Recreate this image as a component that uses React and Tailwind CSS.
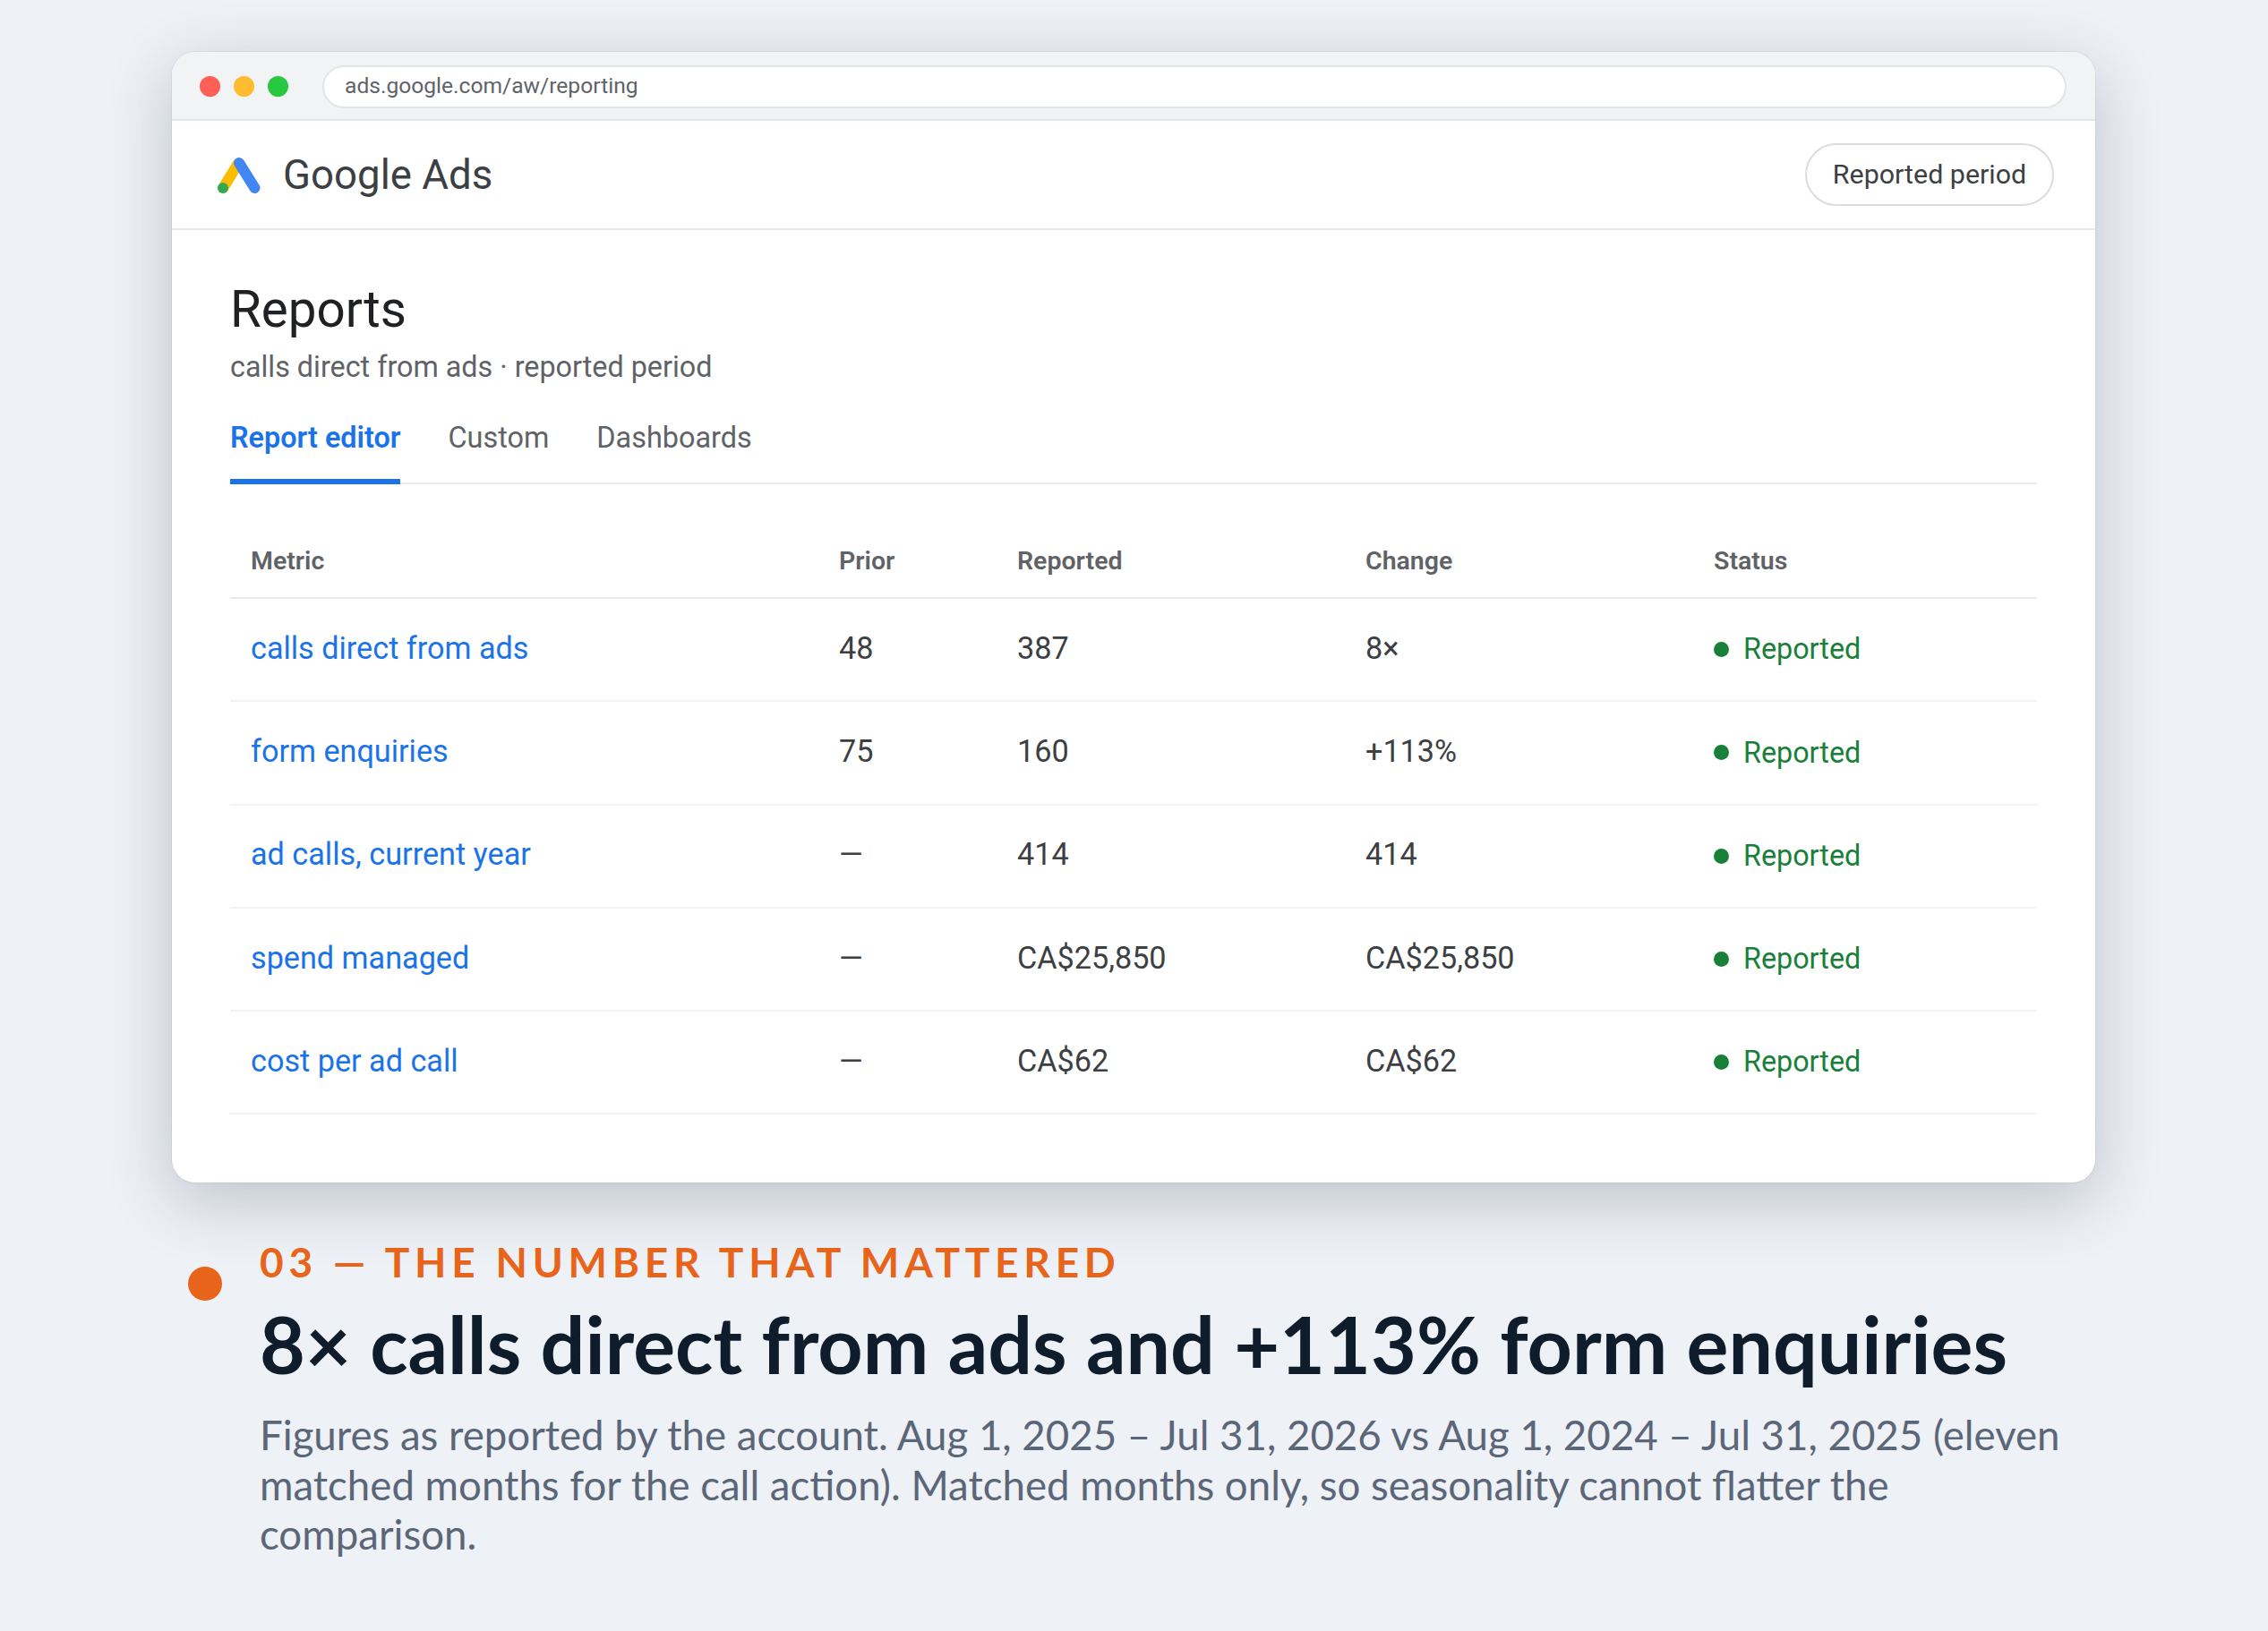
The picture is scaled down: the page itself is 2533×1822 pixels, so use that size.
import React from 'react'

const rows = [
  { metric: 'calls direct from ads', prior: '48', reported: '387', change: '8×' },
  { metric: 'form enquiries', prior: '75', reported: '160', change: '+113%' },
  { metric: 'ad calls, current year', prior: '—', reported: '414', change: '414' },
  { metric: 'spend managed', prior: '—', reported: 'CA$25,850', change: 'CA$25,850' },
  { metric: 'cost per ad call', prior: '—', reported: 'CA$62', change: 'CA$62' },
]

const GoogleAdsLogo = () => (
  <svg width="48" height="40" viewBox="0 0 48 40" className="shrink-0">
    <path d="M6.5 33.5 L23 6.5" stroke="#fbbc04" strokeWidth="12" strokeLinecap="round" fill="none" />
    <path d="M24 6 L41.5 34" stroke="#4285f4" strokeWidth="12" strokeLinecap="round" fill="none" />
    <circle cx="6" cy="34" r="6" fill="#34a853" />
  </svg>
)

const App = () => {
  return (
    <div className="w-[2533px] h-[1822px] overflow-hidden bg-[#eef1f6] pt-[58px] pl-[192px] font-['Roboto',sans-serif]">
      {/* Browser window */}
      <div className="w-[2148px] h-[1263px] rounded-[26px] bg-white overflow-hidden shadow-[0_0_0_1px_rgba(30,41,59,0.06),0_20px_72px_rgba(30,41,59,0.23)]">
        <div className="h-[77px] flex items-center gap-[15px] pl-[31px] pr-[32px] pt-[2px] bg-[#f1f3f5] border-b-2 border-[#e2e5e9]">
          <span className="w-[23px] h-[23px] rounded-full bg-[#ff5f57]" />
          <span className="w-[23px] h-[23px] rounded-full bg-[#febc2e]" />
          <span className="w-[23px] h-[23px] rounded-full bg-[#28c840]" />
          <div className="flex-1 h-[48px] ml-[23px] flex items-center px-[23px] rounded-full bg-white border-2 border-[#e2e5e9] text-[24.6px] text-[#5f6368]">
            ads.google.com/aw/reporting
          </div>
        </div>

        <div className="h-[122px] flex items-center justify-between pl-[51px] pr-[46px] pt-[3px] border-b-2 border-[#e8eaed]">
          <div className="flex items-center gap-[25px]">
            <GoogleAdsLogo />
            <span className="text-[45.6px] text-[#3c4043]">Google Ads</span>
          </div>
          <button className="h-[70px] w-[278px] mb-[3px] rounded-full bg-white border-2 border-[#dadce0] text-[30.4px] text-[#3c4043]">
            Reported period
          </button>
        </div>

        <div className="pt-[55px] pl-[65px] pr-[65px]">
          <h1 className="text-[56.5px] leading-[68px] font-normal text-[#202124]">Reports</h1>
          <p className="mt-[8px] text-[32.3px] leading-[44px] text-[#5f6368]">calls direct from ads · reported period</p>

          <div className="mt-[19px] flex gap-[53px] border-b-2 border-[#e8eaed] h-[90px]">
            <div className="h-[90px] pt-[14px] border-b-[6px] border-[#1a73e8] text-[32.4px] font-semibold text-[#1a73e8]">Report editor</div>
            <div className="pt-[14px] text-[32.4px] text-[#5f6368]">Custom</div>
            <div className="pt-[14px] text-[32.4px] text-[#5f6368]">Dashboards</div>
          </div>

          <div className="mt-[47px]">
            <div className="grid grid-cols-[657px_199px_389px_389px_384px] items-center h-[81px] border-b-2 border-[#e8eaed] text-[28.5px] font-semibold text-[#5f6368]">
              <div className="pl-[23px]">Metric</div>
              <div className="pl-[23px]">Prior</div>
              <div className="pl-[23px]">Reported</div>
              <div className="pl-[23px]">Change</div>
              <div className="pl-[23px]">Status</div>
            </div>
            {rows.map((row) => (
              <div
                key={row.metric}
                className="grid grid-cols-[657px_199px_389px_389px_384px] items-center h-[115.25px] border-b-2 border-[#f1f3f4] text-[34.2px] text-[#3c4043]"
              >
                <div className="pl-[23px] pb-[2px] text-[#1a73e8]">{row.metric}</div>
                <div className="pl-[23px] pb-[2px]">{row.prior}</div>
                <div className="pl-[23px] pb-[2px]">{row.reported}</div>
                <div className="pl-[23px] pb-[2px]">{row.change}</div>
                <div className="pl-[23px] flex items-center gap-[16px] text-[32.3px] text-[#188038]">
                  <span className="w-[17px] h-[17px] rounded-full bg-[#188038]" />
                  Reported
                </div>
              </div>
            ))}
          </div>
        </div>
      </div>

      {/* Caption */}
      <div className="mt-[61px] ml-[18px] flex gap-[42px] font-['Lato',sans-serif]">
        <span className="mt-[33px] w-[38px] h-[38px] rounded-full bg-[#e8641b] shrink-0" />
        <div className="w-[2030px]">
          <div className="text-[46px] leading-[56px] font-bold tracking-[0.125em] text-[#e8641b]">03 — THE NUMBER THAT MATTERED</div>
          <h2 className="mt-[10px] text-[87.8px] leading-[106px] font-bold text-[#0f1c2c]">8× calls direct from ads and +113% form enquiries</h2>
          <p className="mt-[21px] text-[45.6px] leading-[55.5px] text-[#5b6678]">
            Figures as reported by the account. Aug 1, 2025 – Jul 31, 2026 vs Aug 1, 2024 – Jul 31, 2025 (eleven matched months for the call action). Matched months only, so seasonality cannot flatter the comparison.
          </p>
        </div>
      </div>
    </div>
  )
}

export default App
